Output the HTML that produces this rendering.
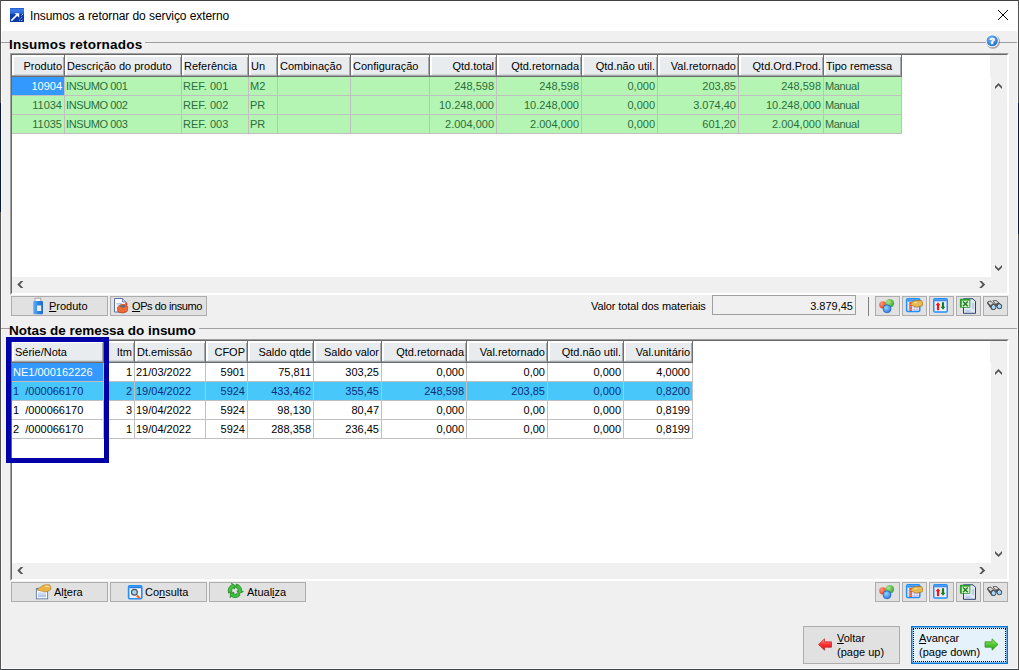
<!DOCTYPE html><html><head><meta charset="utf-8"><style>
html,body{margin:0;padding:0;width:1019px;height:670px;overflow:hidden;background:#f0f0f0;}
.a{position:absolute;}
.t{font-family:"Liberation Sans",sans-serif;}
u{text-decoration:underline;text-underline-offset:1px;}
</style></head><body>
<div class="a " style="left:0px;top:0px;width:1019px;height:670px;background:#f0f0f0;"></div>
<div class="a " style="left:1px;top:1px;width:1017px;height:30px;background:#fff;"></div>
<div class="a " style="left:1px;top:31px;width:1px;height:638px;background:#fafafa;"></div>
<div class="a " style="left:1017px;top:31px;width:1px;height:638px;background:#fafafa;"></div>
<div class="a " style="left:1px;top:668px;width:1017px;height:1px;background:#fafafa;"></div>
<div class="a " style="left:0px;top:0px;width:1019px;height:1px;background:#424242;"></div>
<div class="a " style="left:0px;top:669px;width:1019px;height:1px;background:#40444c;"></div>
<div class="a " style="left:0px;top:0px;width:1px;height:670px;background:#555555;"></div>
<div class="a " style="left:1018px;top:0px;width:1px;height:670px;background:#505050;"></div>
<div class="a " style="left:0px;top:103px;width:1px;height:109px;background:#0c1a40;"></div>
<div class="a " style="left:1018px;top:103px;width:1px;height:131px;background:#0c1a40;"></div>
<svg class="a" style="left:10px;top:8px" width="14" height="14" viewBox="0 0 14 14">
<defs><linearGradient id="tg" x1="0" y1="0" x2="0" y2="1"><stop offset="0" stop-color="#1a55c8"/><stop offset="0.12" stop-color="#3d7fe6"/><stop offset="0.38" stop-color="#2a66d4"/><stop offset="0.48" stop-color="#0a3cae"/><stop offset="1" stop-color="#0636a6"/></linearGradient></defs>
<rect x="0" y="0" width="14" height="14" fill="url(#tg)"/>
<path d="M1.3 12.6 L7 6.9" stroke="#fff" stroke-width="1.7"/>
<path d="M4.6 5.2 L9.2 5.2 L9.2 9.8 Z" fill="#fff"/>
<path d="M10.5 10.5 l1.2 -1.2 M11 13 l1.5 -1.2 M11.5 7.5 l1.5 -1.5 M9 12.5 l1 -0.8" stroke="#a8c4f0" stroke-width="1"/>
</svg>
<div class="a t" style="left:30px;top:6px;white-space:nowrap;height:20px;line-height:20px;font-size:12px;color:#000;letter-spacing:-0.08px;">Insumos a retornar do serviço externo</div>
<svg class="a" style="left:997px;top:9px" width="13" height="13" viewBox="0 0 13 13"><path d="M1 1 L11 11 M11 1 L1 11" stroke="#000" stroke-width="1"/></svg>
<div class="a " style="left:1px;top:42px;width:9px;height:1px;background:#a0a0a0;"></div>
<div class="a " style="left:145px;top:42px;width:872px;height:1px;background:#a0a0a0;"></div>
<div class="a t" style="left:9px;top:35px;white-space:nowrap;height:20px;line-height:20px;font-size:13.5px;color:#000;font-weight:bold;letter-spacing:0.2px;">Insumos retornados</div>
<div class="a " style="left:10px;top:53px;width:999px;height:242px;background:#fff;box-sizing:border-box;border-top:1px solid #a0a0a0;border-left:1px solid #a0a0a0;border-right:1px solid #fff;border-bottom:1px solid #fff;"></div>
<div class="a " style="left:11px;top:54px;width:997px;height:240px;box-sizing:border-box;border-top:1px solid #696969;border-left:1px solid #696969;border-right:1px solid #fff;border-bottom:1px solid #fff;"></div>
<div class="a " style="left:12px;top:55px;width:53px;height:22px;background:#e9ecef;"></div>
<div class="a " style="left:12px;top:55px;width:52px;height:2px;background:#fff;"></div>
<div class="a " style="left:12px;top:55px;width:2px;height:20px;background:#fff;"></div>
<div class="a " style="left:14px;top:74px;width:50px;height:1px;background:#d5d8db;"></div>
<div class="a " style="left:12px;top:75px;width:52px;height:1px;background:#a4a7aa;"></div>
<div class="a " style="left:12px;top:76px;width:53px;height:1px;background:#6d6d6d;"></div>
<div class="a " style="left:63px;top:57px;width:1px;height:18px;background:#a8abae;"></div>
<div class="a " style="left:64px;top:55px;width:1px;height:22px;background:#707070;"></div>
<div class="a t" style="left:12px;top:56px;width:50px;text-align:right;height:20px;line-height:20px;font-size:11px;color:#000;">Produto</div>
<div class="a " style="left:65px;top:55px;width:117px;height:22px;background:#e9ecef;"></div>
<div class="a " style="left:65px;top:55px;width:116px;height:2px;background:#fff;"></div>
<div class="a " style="left:65px;top:55px;width:2px;height:20px;background:#fff;"></div>
<div class="a " style="left:67px;top:74px;width:114px;height:1px;background:#d5d8db;"></div>
<div class="a " style="left:65px;top:75px;width:116px;height:1px;background:#a4a7aa;"></div>
<div class="a " style="left:65px;top:76px;width:117px;height:1px;background:#6d6d6d;"></div>
<div class="a " style="left:180px;top:57px;width:1px;height:18px;background:#a8abae;"></div>
<div class="a " style="left:181px;top:55px;width:1px;height:22px;background:#707070;"></div>
<div class="a t" style="left:67px;top:56px;white-space:nowrap;height:20px;line-height:20px;font-size:11px;color:#000;">Descrição do produto</div>
<div class="a " style="left:182px;top:55px;width:67px;height:22px;background:#e9ecef;"></div>
<div class="a " style="left:182px;top:55px;width:66px;height:2px;background:#fff;"></div>
<div class="a " style="left:182px;top:55px;width:2px;height:20px;background:#fff;"></div>
<div class="a " style="left:184px;top:74px;width:64px;height:1px;background:#d5d8db;"></div>
<div class="a " style="left:182px;top:75px;width:66px;height:1px;background:#a4a7aa;"></div>
<div class="a " style="left:182px;top:76px;width:67px;height:1px;background:#6d6d6d;"></div>
<div class="a " style="left:247px;top:57px;width:1px;height:18px;background:#a8abae;"></div>
<div class="a " style="left:248px;top:55px;width:1px;height:22px;background:#707070;"></div>
<div class="a t" style="left:184px;top:56px;white-space:nowrap;height:20px;line-height:20px;font-size:11px;color:#000;">Referência</div>
<div class="a " style="left:249px;top:55px;width:29px;height:22px;background:#e9ecef;"></div>
<div class="a " style="left:249px;top:55px;width:28px;height:2px;background:#fff;"></div>
<div class="a " style="left:249px;top:55px;width:2px;height:20px;background:#fff;"></div>
<div class="a " style="left:251px;top:74px;width:26px;height:1px;background:#d5d8db;"></div>
<div class="a " style="left:249px;top:75px;width:28px;height:1px;background:#a4a7aa;"></div>
<div class="a " style="left:249px;top:76px;width:29px;height:1px;background:#6d6d6d;"></div>
<div class="a " style="left:276px;top:57px;width:1px;height:18px;background:#a8abae;"></div>
<div class="a " style="left:277px;top:55px;width:1px;height:22px;background:#707070;"></div>
<div class="a t" style="left:251px;top:56px;white-space:nowrap;height:20px;line-height:20px;font-size:11px;color:#000;">Un</div>
<div class="a " style="left:278px;top:55px;width:73px;height:22px;background:#e9ecef;"></div>
<div class="a " style="left:278px;top:55px;width:72px;height:2px;background:#fff;"></div>
<div class="a " style="left:278px;top:55px;width:2px;height:20px;background:#fff;"></div>
<div class="a " style="left:280px;top:74px;width:70px;height:1px;background:#d5d8db;"></div>
<div class="a " style="left:278px;top:75px;width:72px;height:1px;background:#a4a7aa;"></div>
<div class="a " style="left:278px;top:76px;width:73px;height:1px;background:#6d6d6d;"></div>
<div class="a " style="left:349px;top:57px;width:1px;height:18px;background:#a8abae;"></div>
<div class="a " style="left:350px;top:55px;width:1px;height:22px;background:#707070;"></div>
<div class="a t" style="left:280px;top:56px;white-space:nowrap;height:20px;line-height:20px;font-size:11px;color:#000;">Combinação</div>
<div class="a " style="left:351px;top:55px;width:79px;height:22px;background:#e9ecef;"></div>
<div class="a " style="left:351px;top:55px;width:78px;height:2px;background:#fff;"></div>
<div class="a " style="left:351px;top:55px;width:2px;height:20px;background:#fff;"></div>
<div class="a " style="left:353px;top:74px;width:76px;height:1px;background:#d5d8db;"></div>
<div class="a " style="left:351px;top:75px;width:78px;height:1px;background:#a4a7aa;"></div>
<div class="a " style="left:351px;top:76px;width:79px;height:1px;background:#6d6d6d;"></div>
<div class="a " style="left:428px;top:57px;width:1px;height:18px;background:#a8abae;"></div>
<div class="a " style="left:429px;top:55px;width:1px;height:22px;background:#707070;"></div>
<div class="a t" style="left:353px;top:56px;white-space:nowrap;height:20px;line-height:20px;font-size:11px;color:#000;">Configuração</div>
<div class="a " style="left:430px;top:55px;width:67px;height:22px;background:#e9ecef;"></div>
<div class="a " style="left:430px;top:55px;width:66px;height:2px;background:#fff;"></div>
<div class="a " style="left:430px;top:55px;width:2px;height:20px;background:#fff;"></div>
<div class="a " style="left:432px;top:74px;width:64px;height:1px;background:#d5d8db;"></div>
<div class="a " style="left:430px;top:75px;width:66px;height:1px;background:#a4a7aa;"></div>
<div class="a " style="left:430px;top:76px;width:67px;height:1px;background:#6d6d6d;"></div>
<div class="a " style="left:495px;top:57px;width:1px;height:18px;background:#a8abae;"></div>
<div class="a " style="left:496px;top:55px;width:1px;height:22px;background:#707070;"></div>
<div class="a t" style="left:430px;top:56px;width:64px;text-align:right;height:20px;line-height:20px;font-size:11px;color:#000;">Qtd.total</div>
<div class="a " style="left:497px;top:55px;width:85px;height:22px;background:#e9ecef;"></div>
<div class="a " style="left:497px;top:55px;width:84px;height:2px;background:#fff;"></div>
<div class="a " style="left:497px;top:55px;width:2px;height:20px;background:#fff;"></div>
<div class="a " style="left:499px;top:74px;width:82px;height:1px;background:#d5d8db;"></div>
<div class="a " style="left:497px;top:75px;width:84px;height:1px;background:#a4a7aa;"></div>
<div class="a " style="left:497px;top:76px;width:85px;height:1px;background:#6d6d6d;"></div>
<div class="a " style="left:580px;top:57px;width:1px;height:18px;background:#a8abae;"></div>
<div class="a " style="left:581px;top:55px;width:1px;height:22px;background:#707070;"></div>
<div class="a t" style="left:497px;top:56px;width:82px;text-align:right;height:20px;line-height:20px;font-size:11px;color:#000;">Qtd.retornada</div>
<div class="a " style="left:582px;top:55px;width:76px;height:22px;background:#e9ecef;"></div>
<div class="a " style="left:582px;top:55px;width:75px;height:2px;background:#fff;"></div>
<div class="a " style="left:582px;top:55px;width:2px;height:20px;background:#fff;"></div>
<div class="a " style="left:584px;top:74px;width:73px;height:1px;background:#d5d8db;"></div>
<div class="a " style="left:582px;top:75px;width:75px;height:1px;background:#a4a7aa;"></div>
<div class="a " style="left:582px;top:76px;width:76px;height:1px;background:#6d6d6d;"></div>
<div class="a " style="left:656px;top:57px;width:1px;height:18px;background:#a8abae;"></div>
<div class="a " style="left:657px;top:55px;width:1px;height:22px;background:#707070;"></div>
<div class="a t" style="left:582px;top:56px;width:73px;text-align:right;height:20px;line-height:20px;font-size:11px;color:#000;">Qtd.não util.</div>
<div class="a " style="left:658px;top:55px;width:81px;height:22px;background:#e9ecef;"></div>
<div class="a " style="left:658px;top:55px;width:80px;height:2px;background:#fff;"></div>
<div class="a " style="left:658px;top:55px;width:2px;height:20px;background:#fff;"></div>
<div class="a " style="left:660px;top:74px;width:78px;height:1px;background:#d5d8db;"></div>
<div class="a " style="left:658px;top:75px;width:80px;height:1px;background:#a4a7aa;"></div>
<div class="a " style="left:658px;top:76px;width:81px;height:1px;background:#6d6d6d;"></div>
<div class="a " style="left:737px;top:57px;width:1px;height:18px;background:#a8abae;"></div>
<div class="a " style="left:738px;top:55px;width:1px;height:22px;background:#707070;"></div>
<div class="a t" style="left:658px;top:56px;width:78px;text-align:right;height:20px;line-height:20px;font-size:11px;color:#000;">Val.retornado</div>
<div class="a " style="left:739px;top:55px;width:85px;height:22px;background:#e9ecef;"></div>
<div class="a " style="left:739px;top:55px;width:84px;height:2px;background:#fff;"></div>
<div class="a " style="left:739px;top:55px;width:2px;height:20px;background:#fff;"></div>
<div class="a " style="left:741px;top:74px;width:82px;height:1px;background:#d5d8db;"></div>
<div class="a " style="left:739px;top:75px;width:84px;height:1px;background:#a4a7aa;"></div>
<div class="a " style="left:739px;top:76px;width:85px;height:1px;background:#6d6d6d;"></div>
<div class="a " style="left:822px;top:57px;width:1px;height:18px;background:#a8abae;"></div>
<div class="a " style="left:823px;top:55px;width:1px;height:22px;background:#707070;"></div>
<div class="a t" style="left:739px;top:56px;width:82px;text-align:right;height:20px;line-height:20px;font-size:11px;color:#000;">Qtd.Ord.Prod.</div>
<div class="a " style="left:824px;top:55px;width:78px;height:22px;background:#e9ecef;"></div>
<div class="a " style="left:824px;top:55px;width:77px;height:2px;background:#fff;"></div>
<div class="a " style="left:824px;top:55px;width:2px;height:20px;background:#fff;"></div>
<div class="a " style="left:826px;top:74px;width:75px;height:1px;background:#d5d8db;"></div>
<div class="a " style="left:824px;top:75px;width:77px;height:1px;background:#a4a7aa;"></div>
<div class="a " style="left:824px;top:76px;width:78px;height:1px;background:#6d6d6d;"></div>
<div class="a " style="left:900px;top:57px;width:1px;height:18px;background:#a8abae;"></div>
<div class="a " style="left:901px;top:55px;width:1px;height:22px;background:#707070;"></div>
<div class="a t" style="left:826px;top:56px;white-space:nowrap;height:20px;line-height:20px;font-size:11px;color:#000;">Tipo remessa</div>
<div class="a " style="left:12px;top:77px;width:52px;height:18px;background:#3399ff;"></div>
<div class="a " style="left:64px;top:77px;width:1px;height:19px;background:#c0c0c0;"></div>
<div class="a " style="left:12px;top:95px;width:52px;height:1px;background:#c0c0c0;"></div>
<div class="a t" style="left:12px;top:76px;width:50px;text-align:right;height:20px;line-height:20px;font-size:11px;color:#ffffff;">10904</div>
<div class="a " style="left:65px;top:77px;width:116px;height:18px;background:#b4f5b4;"></div>
<div class="a " style="left:181px;top:77px;width:1px;height:19px;background:#c0c0c0;"></div>
<div class="a " style="left:65px;top:95px;width:116px;height:1px;background:#c0c0c0;"></div>
<div class="a t" style="left:66px;top:76px;white-space:nowrap;height:20px;line-height:20px;font-size:11px;color:#2c6e3a;letter-spacing:-0.4px;">INSUMO 001</div>
<div class="a " style="left:182px;top:77px;width:66px;height:18px;background:#b4f5b4;"></div>
<div class="a " style="left:248px;top:77px;width:1px;height:19px;background:#c0c0c0;"></div>
<div class="a " style="left:182px;top:95px;width:66px;height:1px;background:#c0c0c0;"></div>
<div class="a t" style="left:183px;top:76px;white-space:nowrap;height:20px;line-height:20px;font-size:11px;color:#2c6e3a;">REF. 001</div>
<div class="a " style="left:249px;top:77px;width:28px;height:18px;background:#b4f5b4;"></div>
<div class="a " style="left:277px;top:77px;width:1px;height:19px;background:#c0c0c0;"></div>
<div class="a " style="left:249px;top:95px;width:28px;height:1px;background:#c0c0c0;"></div>
<div class="a t" style="left:250px;top:76px;white-space:nowrap;height:20px;line-height:20px;font-size:11px;color:#2c6e3a;">M2</div>
<div class="a " style="left:278px;top:77px;width:72px;height:18px;background:#b4f5b4;"></div>
<div class="a " style="left:350px;top:77px;width:1px;height:19px;background:#c0c0c0;"></div>
<div class="a " style="left:278px;top:95px;width:72px;height:1px;background:#c0c0c0;"></div>
<div class="a " style="left:351px;top:77px;width:78px;height:18px;background:#b4f5b4;"></div>
<div class="a " style="left:429px;top:77px;width:1px;height:19px;background:#c0c0c0;"></div>
<div class="a " style="left:351px;top:95px;width:78px;height:1px;background:#c0c0c0;"></div>
<div class="a " style="left:430px;top:77px;width:66px;height:18px;background:#b4f5b4;"></div>
<div class="a " style="left:496px;top:77px;width:1px;height:19px;background:#c0c0c0;"></div>
<div class="a " style="left:430px;top:95px;width:66px;height:1px;background:#c0c0c0;"></div>
<div class="a t" style="left:430px;top:76px;width:64px;text-align:right;height:20px;line-height:20px;font-size:11px;color:#2c6e3a;">248,598</div>
<div class="a " style="left:497px;top:77px;width:84px;height:18px;background:#b4f5b4;"></div>
<div class="a " style="left:581px;top:77px;width:1px;height:19px;background:#c0c0c0;"></div>
<div class="a " style="left:497px;top:95px;width:84px;height:1px;background:#c0c0c0;"></div>
<div class="a t" style="left:497px;top:76px;width:82px;text-align:right;height:20px;line-height:20px;font-size:11px;color:#2c6e3a;">248,598</div>
<div class="a " style="left:582px;top:77px;width:75px;height:18px;background:#b4f5b4;"></div>
<div class="a " style="left:657px;top:77px;width:1px;height:19px;background:#c0c0c0;"></div>
<div class="a " style="left:582px;top:95px;width:75px;height:1px;background:#c0c0c0;"></div>
<div class="a t" style="left:582px;top:76px;width:73px;text-align:right;height:20px;line-height:20px;font-size:11px;color:#2c6e3a;">0,000</div>
<div class="a " style="left:658px;top:77px;width:80px;height:18px;background:#b4f5b4;"></div>
<div class="a " style="left:738px;top:77px;width:1px;height:19px;background:#c0c0c0;"></div>
<div class="a " style="left:658px;top:95px;width:80px;height:1px;background:#c0c0c0;"></div>
<div class="a t" style="left:658px;top:76px;width:78px;text-align:right;height:20px;line-height:20px;font-size:11px;color:#2c6e3a;">203,85</div>
<div class="a " style="left:739px;top:77px;width:84px;height:18px;background:#b4f5b4;"></div>
<div class="a " style="left:823px;top:77px;width:1px;height:19px;background:#c0c0c0;"></div>
<div class="a " style="left:739px;top:95px;width:84px;height:1px;background:#c0c0c0;"></div>
<div class="a t" style="left:739px;top:76px;width:82px;text-align:right;height:20px;line-height:20px;font-size:11px;color:#2c6e3a;">248,598</div>
<div class="a " style="left:824px;top:77px;width:77px;height:18px;background:#b4f5b4;"></div>
<div class="a " style="left:901px;top:77px;width:1px;height:19px;background:#c0c0c0;"></div>
<div class="a " style="left:824px;top:95px;width:77px;height:1px;background:#c0c0c0;"></div>
<div class="a t" style="left:825px;top:76px;white-space:nowrap;height:20px;line-height:20px;font-size:11px;color:#2c6e3a;letter-spacing:-0.35px;">Manual</div>
<div class="a " style="left:12px;top:96px;width:52px;height:18px;background:#b4f5b4;"></div>
<div class="a " style="left:64px;top:96px;width:1px;height:19px;background:#c0c0c0;"></div>
<div class="a " style="left:12px;top:114px;width:52px;height:1px;background:#c0c0c0;"></div>
<div class="a t" style="left:12px;top:95px;width:50px;text-align:right;height:20px;line-height:20px;font-size:11px;color:#2c6e3a;">11034</div>
<div class="a " style="left:65px;top:96px;width:116px;height:18px;background:#b4f5b4;"></div>
<div class="a " style="left:181px;top:96px;width:1px;height:19px;background:#c0c0c0;"></div>
<div class="a " style="left:65px;top:114px;width:116px;height:1px;background:#c0c0c0;"></div>
<div class="a t" style="left:66px;top:95px;white-space:nowrap;height:20px;line-height:20px;font-size:11px;color:#2c6e3a;letter-spacing:-0.4px;">INSUMO 002</div>
<div class="a " style="left:182px;top:96px;width:66px;height:18px;background:#b4f5b4;"></div>
<div class="a " style="left:248px;top:96px;width:1px;height:19px;background:#c0c0c0;"></div>
<div class="a " style="left:182px;top:114px;width:66px;height:1px;background:#c0c0c0;"></div>
<div class="a t" style="left:183px;top:95px;white-space:nowrap;height:20px;line-height:20px;font-size:11px;color:#2c6e3a;">REF. 002</div>
<div class="a " style="left:249px;top:96px;width:28px;height:18px;background:#b4f5b4;"></div>
<div class="a " style="left:277px;top:96px;width:1px;height:19px;background:#c0c0c0;"></div>
<div class="a " style="left:249px;top:114px;width:28px;height:1px;background:#c0c0c0;"></div>
<div class="a t" style="left:250px;top:95px;white-space:nowrap;height:20px;line-height:20px;font-size:11px;color:#2c6e3a;">PR</div>
<div class="a " style="left:278px;top:96px;width:72px;height:18px;background:#b4f5b4;"></div>
<div class="a " style="left:350px;top:96px;width:1px;height:19px;background:#c0c0c0;"></div>
<div class="a " style="left:278px;top:114px;width:72px;height:1px;background:#c0c0c0;"></div>
<div class="a " style="left:351px;top:96px;width:78px;height:18px;background:#b4f5b4;"></div>
<div class="a " style="left:429px;top:96px;width:1px;height:19px;background:#c0c0c0;"></div>
<div class="a " style="left:351px;top:114px;width:78px;height:1px;background:#c0c0c0;"></div>
<div class="a " style="left:430px;top:96px;width:66px;height:18px;background:#b4f5b4;"></div>
<div class="a " style="left:496px;top:96px;width:1px;height:19px;background:#c0c0c0;"></div>
<div class="a " style="left:430px;top:114px;width:66px;height:1px;background:#c0c0c0;"></div>
<div class="a t" style="left:430px;top:95px;width:64px;text-align:right;height:20px;line-height:20px;font-size:11px;color:#2c6e3a;">10.248,000</div>
<div class="a " style="left:497px;top:96px;width:84px;height:18px;background:#b4f5b4;"></div>
<div class="a " style="left:581px;top:96px;width:1px;height:19px;background:#c0c0c0;"></div>
<div class="a " style="left:497px;top:114px;width:84px;height:1px;background:#c0c0c0;"></div>
<div class="a t" style="left:497px;top:95px;width:82px;text-align:right;height:20px;line-height:20px;font-size:11px;color:#2c6e3a;">10.248,000</div>
<div class="a " style="left:582px;top:96px;width:75px;height:18px;background:#b4f5b4;"></div>
<div class="a " style="left:657px;top:96px;width:1px;height:19px;background:#c0c0c0;"></div>
<div class="a " style="left:582px;top:114px;width:75px;height:1px;background:#c0c0c0;"></div>
<div class="a t" style="left:582px;top:95px;width:73px;text-align:right;height:20px;line-height:20px;font-size:11px;color:#2c6e3a;">0,000</div>
<div class="a " style="left:658px;top:96px;width:80px;height:18px;background:#b4f5b4;"></div>
<div class="a " style="left:738px;top:96px;width:1px;height:19px;background:#c0c0c0;"></div>
<div class="a " style="left:658px;top:114px;width:80px;height:1px;background:#c0c0c0;"></div>
<div class="a t" style="left:658px;top:95px;width:78px;text-align:right;height:20px;line-height:20px;font-size:11px;color:#2c6e3a;">3.074,40</div>
<div class="a " style="left:739px;top:96px;width:84px;height:18px;background:#b4f5b4;"></div>
<div class="a " style="left:823px;top:96px;width:1px;height:19px;background:#c0c0c0;"></div>
<div class="a " style="left:739px;top:114px;width:84px;height:1px;background:#c0c0c0;"></div>
<div class="a t" style="left:739px;top:95px;width:82px;text-align:right;height:20px;line-height:20px;font-size:11px;color:#2c6e3a;">10.248,000</div>
<div class="a " style="left:824px;top:96px;width:77px;height:18px;background:#b4f5b4;"></div>
<div class="a " style="left:901px;top:96px;width:1px;height:19px;background:#c0c0c0;"></div>
<div class="a " style="left:824px;top:114px;width:77px;height:1px;background:#c0c0c0;"></div>
<div class="a t" style="left:825px;top:95px;white-space:nowrap;height:20px;line-height:20px;font-size:11px;color:#2c6e3a;letter-spacing:-0.35px;">Manual</div>
<div class="a " style="left:12px;top:115px;width:52px;height:18px;background:#b4f5b4;"></div>
<div class="a " style="left:64px;top:115px;width:1px;height:19px;background:#c0c0c0;"></div>
<div class="a " style="left:12px;top:133px;width:52px;height:1px;background:#c0c0c0;"></div>
<div class="a t" style="left:12px;top:114px;width:50px;text-align:right;height:20px;line-height:20px;font-size:11px;color:#2c6e3a;">11035</div>
<div class="a " style="left:65px;top:115px;width:116px;height:18px;background:#b4f5b4;"></div>
<div class="a " style="left:181px;top:115px;width:1px;height:19px;background:#c0c0c0;"></div>
<div class="a " style="left:65px;top:133px;width:116px;height:1px;background:#c0c0c0;"></div>
<div class="a t" style="left:66px;top:114px;white-space:nowrap;height:20px;line-height:20px;font-size:11px;color:#2c6e3a;letter-spacing:-0.4px;">INSUMO 003</div>
<div class="a " style="left:182px;top:115px;width:66px;height:18px;background:#b4f5b4;"></div>
<div class="a " style="left:248px;top:115px;width:1px;height:19px;background:#c0c0c0;"></div>
<div class="a " style="left:182px;top:133px;width:66px;height:1px;background:#c0c0c0;"></div>
<div class="a t" style="left:183px;top:114px;white-space:nowrap;height:20px;line-height:20px;font-size:11px;color:#2c6e3a;">REF. 003</div>
<div class="a " style="left:249px;top:115px;width:28px;height:18px;background:#b4f5b4;"></div>
<div class="a " style="left:277px;top:115px;width:1px;height:19px;background:#c0c0c0;"></div>
<div class="a " style="left:249px;top:133px;width:28px;height:1px;background:#c0c0c0;"></div>
<div class="a t" style="left:250px;top:114px;white-space:nowrap;height:20px;line-height:20px;font-size:11px;color:#2c6e3a;">PR</div>
<div class="a " style="left:278px;top:115px;width:72px;height:18px;background:#b4f5b4;"></div>
<div class="a " style="left:350px;top:115px;width:1px;height:19px;background:#c0c0c0;"></div>
<div class="a " style="left:278px;top:133px;width:72px;height:1px;background:#c0c0c0;"></div>
<div class="a " style="left:351px;top:115px;width:78px;height:18px;background:#b4f5b4;"></div>
<div class="a " style="left:429px;top:115px;width:1px;height:19px;background:#c0c0c0;"></div>
<div class="a " style="left:351px;top:133px;width:78px;height:1px;background:#c0c0c0;"></div>
<div class="a " style="left:430px;top:115px;width:66px;height:18px;background:#b4f5b4;"></div>
<div class="a " style="left:496px;top:115px;width:1px;height:19px;background:#c0c0c0;"></div>
<div class="a " style="left:430px;top:133px;width:66px;height:1px;background:#c0c0c0;"></div>
<div class="a t" style="left:430px;top:114px;width:64px;text-align:right;height:20px;line-height:20px;font-size:11px;color:#2c6e3a;">2.004,000</div>
<div class="a " style="left:497px;top:115px;width:84px;height:18px;background:#b4f5b4;"></div>
<div class="a " style="left:581px;top:115px;width:1px;height:19px;background:#c0c0c0;"></div>
<div class="a " style="left:497px;top:133px;width:84px;height:1px;background:#c0c0c0;"></div>
<div class="a t" style="left:497px;top:114px;width:82px;text-align:right;height:20px;line-height:20px;font-size:11px;color:#2c6e3a;">2.004,000</div>
<div class="a " style="left:582px;top:115px;width:75px;height:18px;background:#b4f5b4;"></div>
<div class="a " style="left:657px;top:115px;width:1px;height:19px;background:#c0c0c0;"></div>
<div class="a " style="left:582px;top:133px;width:75px;height:1px;background:#c0c0c0;"></div>
<div class="a t" style="left:582px;top:114px;width:73px;text-align:right;height:20px;line-height:20px;font-size:11px;color:#2c6e3a;">0,000</div>
<div class="a " style="left:658px;top:115px;width:80px;height:18px;background:#b4f5b4;"></div>
<div class="a " style="left:738px;top:115px;width:1px;height:19px;background:#c0c0c0;"></div>
<div class="a " style="left:658px;top:133px;width:80px;height:1px;background:#c0c0c0;"></div>
<div class="a t" style="left:658px;top:114px;width:78px;text-align:right;height:20px;line-height:20px;font-size:11px;color:#2c6e3a;">601,20</div>
<div class="a " style="left:739px;top:115px;width:84px;height:18px;background:#b4f5b4;"></div>
<div class="a " style="left:823px;top:115px;width:1px;height:19px;background:#c0c0c0;"></div>
<div class="a " style="left:739px;top:133px;width:84px;height:1px;background:#c0c0c0;"></div>
<div class="a t" style="left:739px;top:114px;width:82px;text-align:right;height:20px;line-height:20px;font-size:11px;color:#2c6e3a;">2.004,000</div>
<div class="a " style="left:824px;top:115px;width:77px;height:18px;background:#b4f5b4;"></div>
<div class="a " style="left:901px;top:115px;width:1px;height:19px;background:#c0c0c0;"></div>
<div class="a " style="left:824px;top:133px;width:77px;height:1px;background:#c0c0c0;"></div>
<div class="a t" style="left:825px;top:114px;white-space:nowrap;height:20px;line-height:20px;font-size:11px;color:#2c6e3a;letter-spacing:-0.35px;">Manual</div>
<div class="a " style="left:991px;top:55px;width:16px;height:222px;background:#f0f0f0;"></div>
<div class="a " style="left:990px;top:55px;width:1px;height:22px;background:#f0f0f0;"></div>
<div class="a " style="left:12px;top:277px;width:995px;height:16px;background:#f0f0f0;"></div>
<svg class="a" style="left:994px;top:82px" width="10" height="9"><path d="M1 7 L4.5 3.5 L8 7 V4.6 L4.5 1 L1 4.6 Z" fill="#555"/></svg>
<svg class="a" style="left:994px;top:264px" width="10" height="9"><path d="M1 1 L4.5 4.5 L8 1 V3.4 L4.5 7 L1 3.4 Z" fill="#555"/></svg>
<svg class="a" style="left:16px;top:280px" width="9" height="10"><path d="M4.8 1 H7.3 L4 4.5 L7.3 8 H4.8 L1.3 4.5 Z" fill="#555"/></svg>
<svg class="a" style="left:977px;top:280px" width="9" height="10"><path d="M2.2 1 H4.7 L8.2 4.5 L4.7 8 H2.2 L5.5 4.5 Z" fill="#555"/></svg>
<div class="a " style="left:11px;top:296px;width:97px;height:20px;box-sizing:border-box;background:#e1e1e1;border:1px solid #adadad;"></div>
<svg class="a" style="left:28px;top:294px" width="20" height="24" viewBox="0 0 20 24">
<defs><linearGradient id="bt298" x1="0" y1="0" x2="1" y2="0"><stop offset="0" stop-color="#5fb0ff"/><stop offset="0.5" stop-color="#2f86e8"/><stop offset="1" stop-color="#1f68c8"/></linearGradient></defs>
<rect x="7" y="4.2" width="5.8" height="4" fill="#f4f4f4" stroke="#9a9a9a" stroke-width="0.8"/>
<path d="M5.2 8.2 Q5.2 7 6.4 7 H13.8 Q15 7 15 8.2 V19.3 Q15 20.3 14 20.3 H6.2 Q5.2 20.3 5.2 19.3 Z" fill="url(#bt298)"/>
<rect x="9" y="11.5" width="4.2" height="5.5" fill="#f0ecf4"/></svg>
<div class="a t" style="left:49px;top:296px;white-space:nowrap;height:20px;line-height:20px;font-size:11px;color:#000;"><u>P</u>roduto</div>
<div class="a " style="left:110px;top:296px;width:97px;height:20px;box-sizing:border-box;background:#e1e1e1;border:1px solid #adadad;"></div>
<svg class="a" style="left:110px;top:294px" width="22" height="24" viewBox="0 0 22 24">
<path d="M4.5 4.5 H12.5 L16 8 V18 H4.5 Z" fill="#fdfdff" stroke="#5a6ea8" stroke-width="1"/>
<path d="M12.5 4.5 V8 H16" fill="#c8d4f0" stroke="#5a6ea8" stroke-width="0.8"/>
<path d="M6.5 9.5 h5.5 M6.5 11 h3" stroke="#8a9ad0" stroke-width="0.6"/>
<path d="M7.2 13.5 L10 10.8 L14 10.3 L17.8 12.5 L17.3 17.2 L13 19 L8 18 Z" fill="#f26a3a" stroke="#a83810" stroke-width="0.6"/>
<path d="M9.5 12.5 L11.5 11 L14.5 11 L16 12.3 L13 14 Z" fill="#6a6a6a"/>
<path d="M15.5 9 l1.5 -0.5 l0.5 2.5 l-1.5 0.5 Z" fill="#e03a10"/></svg>
<div class="a t" style="left:132px;top:296px;white-space:nowrap;height:20px;line-height:20px;font-size:11px;color:#000;letter-spacing:-0.4px;"><u>O</u>Ps do insumo</div>
<div class="a " style="left:875px;top:296px;width:25px;height:20px;box-sizing:border-box;background:#e1e1e1;border:1px solid #adadad;"></div>
<svg class="a" style="left:875px;top:296px" width="25" height="20" viewBox="0 0 25 20">
<defs><radialGradient id="c0r" cx="0.35" cy="0.35" r="0.7"><stop offset="0" stop-color="#ff9a7a"/><stop offset="1" stop-color="#e0401e"/></radialGradient>
<radialGradient id="c0g" cx="0.35" cy="0.35" r="0.7"><stop offset="0" stop-color="#a8e890"/><stop offset="1" stop-color="#3aa030"/></radialGradient>
<radialGradient id="c0b" cx="0.4" cy="0.35" r="0.7"><stop offset="0" stop-color="#8fd8ff"/><stop offset="1" stop-color="#2a78e0"/></radialGradient></defs>
<circle cx="7.8" cy="8.8" r="3.6" fill="url(#c0r)"/>
<circle cx="14.8" cy="7.3" r="4.3" fill="url(#c0g)"/>
<circle cx="12" cy="12.8" r="4" fill="url(#c0b)" stroke="#1f5cc0" stroke-width="0.7"/></svg>
<div class="a " style="left:902px;top:296px;width:25px;height:20px;box-sizing:border-box;background:#e1e1e1;border:1px solid #adadad;"></div>
<svg class="a" style="left:902px;top:296px" width="25" height="20" viewBox="0 0 25 20">
<rect x="4.6" y="2.8" width="13.2" height="12.6" rx="1.2" fill="#f2eefa" stroke="#1e90ff" stroke-width="1.5"/>
<rect x="5.3" y="3.4" width="11.8" height="2.2" fill="#3d8ee8"/>
<rect x="7.2" y="6" width="2.8" height="9" fill="#f05a30"/>
<path d="M5.5 8.5 h11.5 M5.5 11 h11.5 M5.5 13.5 h11.5 M12.5 6 v9 M15 6 v9" stroke="#b8b0e0" stroke-width="0.6"/>
<path d="M8.5 8.2 Q10 5 13.5 4.6 L19.5 4.4 Q21.3 6.5 20.3 9.8 L16 11 Q13 11.5 11.5 10 Q9.5 9.5 8.5 8.2 Z" fill="#e6b850" stroke="#9a6a12" stroke-width="0.6"/>
<path d="M12 6.5 q1.5 0.5 3 0" stroke="#fff2b0" stroke-width="0.8" fill="none"/></svg>
<div class="a " style="left:929px;top:296px;width:25px;height:20px;box-sizing:border-box;background:#e1e1e1;border:1px solid #adadad;"></div>
<svg class="a" style="left:929px;top:296px" width="25" height="20" viewBox="0 0 25 20">
<rect x="4.75" y="2.75" width="13.5" height="13.2" rx="1.3" fill="#f4f0fc" stroke="#1e90ff" stroke-width="1.5"/>
<rect x="5.3" y="3.3" width="12.4" height="2" fill="#3d8ee8"/>
<path d="M9 14.2 V8.5" stroke="#ff1010" stroke-width="2.2"/>
<path d="M6.6 9.3 L9 6.2 L11.4 9.3 Z" fill="#ff1010"/>
<path d="M14 6.2 V11.6" stroke="#108020" stroke-width="2.2"/>
<path d="M11.6 10.8 L14 13.8 L16.4 10.8 Z" fill="#108020"/></svg>
<div class="a " style="left:956px;top:296px;width:25px;height:20px;box-sizing:border-box;background:#e1e1e1;border:1px solid #adadad;"></div>
<svg class="a" style="left:956px;top:296px" width="25" height="20" viewBox="0 0 25 20">
<path d="M7.5 2.8 H17 L19.5 5.3 V17.3 H7.5 Z" fill="#dfe8f6" stroke="#2a3f78" stroke-width="1"/>
<path d="M9.5 15 h5 M17 7 v6" stroke="#8aa6d6" stroke-width="0.8"/>
<rect x="3.9" y="2.8" width="10.4" height="9" rx="1" fill="#2a9a30"/>
<rect x="5.8" y="4.6" width="7.6" height="6.4" fill="#d8f5c8"/>
<path d="M7 5.5 L11.8 10.2 M11.8 5.5 L7 10.2" stroke="#1f7a24" stroke-width="1.4"/></svg>
<div class="a " style="left:983px;top:296px;width:25px;height:20px;box-sizing:border-box;background:#e1e1e1;border:1px solid #adadad;"></div>
<svg class="a" style="left:983px;top:296px" width="25" height="20" viewBox="0 0 25 20">
<path d="M3.8 7 Q4.5 5 7.5 4.6 L13 9.5 L12 13.8 L8.8 14 Z" fill="#505050"/>
<path d="M9.5 4.6 Q11 3.6 13.2 4 L19.2 9.2 L18.4 12.8 L14.8 12.8 Z" fill="#505050"/>
<path d="M5.2 6.8 Q6 5.6 7.6 5.6 L10 7.8 L7.4 9 Z" fill="#d8d8d8"/>
<path d="M10.6 5 Q11.8 4.5 13 4.8 L15.2 6.8 L12.6 7.8 Z" fill="#d8d8d8"/>
<circle cx="10.6" cy="11.2" r="2.4" fill="#9ad4ff" stroke="#404040" stroke-width="0.8"/>
<circle cx="16.4" cy="10.4" r="2.3" fill="#9ad4ff" stroke="#404040" stroke-width="0.8"/>
<path d="M9.6 10.2 l1 -0.6 M15.4 9.4 l1 -0.6" stroke="#fff" stroke-width="0.9"/></svg>
<div class="a t" style="left:591px;top:296px;white-space:nowrap;height:20px;line-height:20px;font-size:11px;color:#000;letter-spacing:-0.1px;">Valor total dos materiais</div>
<div class="a " style="left:712px;top:295px;width:144px;height:20px;box-sizing:border-box;background:#f0f0f0;border:1px solid #a0a0a0;"></div>
<div class="a t" style="left:712px;top:296px;width:141px;text-align:right;height:20px;line-height:20px;font-size:11px;color:#000;">3.879,45</div>
<div class="a " style="left:868px;top:297px;width:1px;height:19px;background:#808080;"></div>
<svg class="a" style="left:984px;top:33px" width="17" height="17" viewBox="0 0 17 17">
<defs><radialGradient id="hg" cx="0.4" cy="0.3" r="0.75"><stop offset="0" stop-color="#78b8f8"/><stop offset="1" stop-color="#1a6ad0"/></radialGradient></defs>
<circle cx="9" cy="8.7" r="7" fill="#404040" opacity="0.45"/>
<circle cx="8.2" cy="7.75" r="6.6" fill="#fff"/>
<circle cx="8.2" cy="7.75" r="5.6" fill="url(#hg)"/>
<text x="8.2" y="11" font-family="Liberation Sans" font-weight="bold" font-size="9.5" fill="#fff" stroke="#fff" stroke-width="0.5" text-anchor="middle">?</text></svg>
<div class="a " style="left:1px;top:328px;width:9px;height:1px;background:#a0a0a0;"></div>
<div class="a " style="left:199px;top:328px;width:818px;height:1px;background:#a0a0a0;"></div>
<div class="a t" style="left:9px;top:321px;white-space:nowrap;height:20px;line-height:20px;font-size:13.5px;color:#000;font-weight:bold;letter-spacing:-0.03px;">Notas de remessa do insumo</div>
<div class="a " style="left:10px;top:339px;width:999px;height:242px;background:#fff;box-sizing:border-box;border-top:1px solid #a0a0a0;border-left:1px solid #a0a0a0;border-right:1px solid #fff;border-bottom:1px solid #fff;"></div>
<div class="a " style="left:11px;top:340px;width:997px;height:240px;box-sizing:border-box;border-top:1px solid #696969;border-left:1px solid #696969;border-right:1px solid #fff;border-bottom:1px solid #fff;"></div>
<div class="a " style="left:12px;top:341px;width:92px;height:22px;background:#e9ecef;"></div>
<div class="a " style="left:12px;top:341px;width:91px;height:2px;background:#fff;"></div>
<div class="a " style="left:12px;top:341px;width:2px;height:20px;background:#fff;"></div>
<div class="a " style="left:14px;top:360px;width:89px;height:1px;background:#d5d8db;"></div>
<div class="a " style="left:12px;top:361px;width:91px;height:1px;background:#a4a7aa;"></div>
<div class="a " style="left:12px;top:362px;width:92px;height:1px;background:#6d6d6d;"></div>
<div class="a " style="left:102px;top:343px;width:1px;height:18px;background:#a8abae;"></div>
<div class="a " style="left:103px;top:341px;width:1px;height:22px;background:#707070;"></div>
<div class="a t" style="left:15px;top:342px;white-space:nowrap;height:20px;line-height:20px;font-size:11px;color:#000;">Série/Nota</div>
<div class="a " style="left:104px;top:341px;width:31px;height:22px;background:#e9ecef;"></div>
<div class="a " style="left:104px;top:341px;width:30px;height:2px;background:#fff;"></div>
<div class="a " style="left:104px;top:341px;width:2px;height:20px;background:#fff;"></div>
<div class="a " style="left:106px;top:360px;width:28px;height:1px;background:#d5d8db;"></div>
<div class="a " style="left:104px;top:361px;width:30px;height:1px;background:#a4a7aa;"></div>
<div class="a " style="left:104px;top:362px;width:31px;height:1px;background:#6d6d6d;"></div>
<div class="a " style="left:133px;top:343px;width:1px;height:18px;background:#a8abae;"></div>
<div class="a " style="left:134px;top:341px;width:1px;height:22px;background:#707070;"></div>
<div class="a t" style="left:104px;top:342px;width:28px;text-align:right;height:20px;line-height:20px;font-size:11px;color:#000;">Itm</div>
<div class="a " style="left:135px;top:341px;width:71px;height:22px;background:#e9ecef;"></div>
<div class="a " style="left:135px;top:341px;width:70px;height:2px;background:#fff;"></div>
<div class="a " style="left:135px;top:341px;width:2px;height:20px;background:#fff;"></div>
<div class="a " style="left:137px;top:360px;width:68px;height:1px;background:#d5d8db;"></div>
<div class="a " style="left:135px;top:361px;width:70px;height:1px;background:#a4a7aa;"></div>
<div class="a " style="left:135px;top:362px;width:71px;height:1px;background:#6d6d6d;"></div>
<div class="a " style="left:204px;top:343px;width:1px;height:18px;background:#a8abae;"></div>
<div class="a " style="left:205px;top:341px;width:1px;height:22px;background:#707070;"></div>
<div class="a t" style="left:137px;top:342px;white-space:nowrap;height:20px;line-height:20px;font-size:11px;color:#000;">Dt.emissão</div>
<div class="a " style="left:206px;top:341px;width:42px;height:22px;background:#e9ecef;"></div>
<div class="a " style="left:206px;top:341px;width:41px;height:2px;background:#fff;"></div>
<div class="a " style="left:206px;top:341px;width:2px;height:20px;background:#fff;"></div>
<div class="a " style="left:208px;top:360px;width:39px;height:1px;background:#d5d8db;"></div>
<div class="a " style="left:206px;top:361px;width:41px;height:1px;background:#a4a7aa;"></div>
<div class="a " style="left:206px;top:362px;width:42px;height:1px;background:#6d6d6d;"></div>
<div class="a " style="left:246px;top:343px;width:1px;height:18px;background:#a8abae;"></div>
<div class="a " style="left:247px;top:341px;width:1px;height:22px;background:#707070;"></div>
<div class="a t" style="left:206px;top:342px;width:39px;text-align:right;height:20px;line-height:20px;font-size:11px;color:#000;">CFOP</div>
<div class="a " style="left:248px;top:341px;width:66px;height:22px;background:#e9ecef;"></div>
<div class="a " style="left:248px;top:341px;width:65px;height:2px;background:#fff;"></div>
<div class="a " style="left:248px;top:341px;width:2px;height:20px;background:#fff;"></div>
<div class="a " style="left:250px;top:360px;width:63px;height:1px;background:#d5d8db;"></div>
<div class="a " style="left:248px;top:361px;width:65px;height:1px;background:#a4a7aa;"></div>
<div class="a " style="left:248px;top:362px;width:66px;height:1px;background:#6d6d6d;"></div>
<div class="a " style="left:312px;top:343px;width:1px;height:18px;background:#a8abae;"></div>
<div class="a " style="left:313px;top:341px;width:1px;height:22px;background:#707070;"></div>
<div class="a t" style="left:248px;top:342px;width:63px;text-align:right;height:20px;line-height:20px;font-size:11px;color:#000;">Saldo qtde</div>
<div class="a " style="left:314px;top:341px;width:68px;height:22px;background:#e9ecef;"></div>
<div class="a " style="left:314px;top:341px;width:67px;height:2px;background:#fff;"></div>
<div class="a " style="left:314px;top:341px;width:2px;height:20px;background:#fff;"></div>
<div class="a " style="left:316px;top:360px;width:65px;height:1px;background:#d5d8db;"></div>
<div class="a " style="left:314px;top:361px;width:67px;height:1px;background:#a4a7aa;"></div>
<div class="a " style="left:314px;top:362px;width:68px;height:1px;background:#6d6d6d;"></div>
<div class="a " style="left:380px;top:343px;width:1px;height:18px;background:#a8abae;"></div>
<div class="a " style="left:381px;top:341px;width:1px;height:22px;background:#707070;"></div>
<div class="a t" style="left:314px;top:342px;width:65px;text-align:right;height:20px;line-height:20px;font-size:11px;color:#000;">Saldo valor</div>
<div class="a " style="left:382px;top:341px;width:85px;height:22px;background:#e9ecef;"></div>
<div class="a " style="left:382px;top:341px;width:84px;height:2px;background:#fff;"></div>
<div class="a " style="left:382px;top:341px;width:2px;height:20px;background:#fff;"></div>
<div class="a " style="left:384px;top:360px;width:82px;height:1px;background:#d5d8db;"></div>
<div class="a " style="left:382px;top:361px;width:84px;height:1px;background:#a4a7aa;"></div>
<div class="a " style="left:382px;top:362px;width:85px;height:1px;background:#6d6d6d;"></div>
<div class="a " style="left:465px;top:343px;width:1px;height:18px;background:#a8abae;"></div>
<div class="a " style="left:466px;top:341px;width:1px;height:22px;background:#707070;"></div>
<div class="a t" style="left:382px;top:342px;width:82px;text-align:right;height:20px;line-height:20px;font-size:11px;color:#000;">Qtd.retornada</div>
<div class="a " style="left:467px;top:341px;width:81px;height:22px;background:#e9ecef;"></div>
<div class="a " style="left:467px;top:341px;width:80px;height:2px;background:#fff;"></div>
<div class="a " style="left:467px;top:341px;width:2px;height:20px;background:#fff;"></div>
<div class="a " style="left:469px;top:360px;width:78px;height:1px;background:#d5d8db;"></div>
<div class="a " style="left:467px;top:361px;width:80px;height:1px;background:#a4a7aa;"></div>
<div class="a " style="left:467px;top:362px;width:81px;height:1px;background:#6d6d6d;"></div>
<div class="a " style="left:546px;top:343px;width:1px;height:18px;background:#a8abae;"></div>
<div class="a " style="left:547px;top:341px;width:1px;height:22px;background:#707070;"></div>
<div class="a t" style="left:467px;top:342px;width:78px;text-align:right;height:20px;line-height:20px;font-size:11px;color:#000;">Val.retornado</div>
<div class="a " style="left:548px;top:341px;width:76px;height:22px;background:#e9ecef;"></div>
<div class="a " style="left:548px;top:341px;width:75px;height:2px;background:#fff;"></div>
<div class="a " style="left:548px;top:341px;width:2px;height:20px;background:#fff;"></div>
<div class="a " style="left:550px;top:360px;width:73px;height:1px;background:#d5d8db;"></div>
<div class="a " style="left:548px;top:361px;width:75px;height:1px;background:#a4a7aa;"></div>
<div class="a " style="left:548px;top:362px;width:76px;height:1px;background:#6d6d6d;"></div>
<div class="a " style="left:622px;top:343px;width:1px;height:18px;background:#a8abae;"></div>
<div class="a " style="left:623px;top:341px;width:1px;height:22px;background:#707070;"></div>
<div class="a t" style="left:548px;top:342px;width:73px;text-align:right;height:20px;line-height:20px;font-size:11px;color:#000;">Qtd.não util.</div>
<div class="a " style="left:624px;top:341px;width:69px;height:22px;background:#e9ecef;"></div>
<div class="a " style="left:624px;top:341px;width:68px;height:2px;background:#fff;"></div>
<div class="a " style="left:624px;top:341px;width:2px;height:20px;background:#fff;"></div>
<div class="a " style="left:626px;top:360px;width:66px;height:1px;background:#d5d8db;"></div>
<div class="a " style="left:624px;top:361px;width:68px;height:1px;background:#a4a7aa;"></div>
<div class="a " style="left:624px;top:362px;width:69px;height:1px;background:#6d6d6d;"></div>
<div class="a " style="left:691px;top:343px;width:1px;height:18px;background:#a8abae;"></div>
<div class="a " style="left:692px;top:341px;width:1px;height:22px;background:#707070;"></div>
<div class="a t" style="left:624px;top:342px;width:66px;text-align:right;height:20px;line-height:20px;font-size:11px;color:#000;">Val.unitário</div>
<div class="a " style="left:12px;top:363px;width:91px;height:18px;background:#3399ff;"></div>
<div class="a " style="left:103px;top:363px;width:1px;height:19px;background:#c0c0c0;"></div>
<div class="a " style="left:12px;top:381px;width:91px;height:1px;background:#c0c0c0;"></div>
<div class="a t" style="left:13px;top:362px;white-space:nowrap;height:20px;line-height:20px;font-size:11px;color:#ffffff;">NE1/000162226</div>
<div class="a " style="left:104px;top:363px;width:30px;height:18px;background:#fff;"></div>
<div class="a " style="left:134px;top:363px;width:1px;height:19px;background:#c0c0c0;"></div>
<div class="a " style="left:104px;top:381px;width:30px;height:1px;background:#c0c0c0;"></div>
<div class="a t" style="left:104px;top:362px;width:28px;text-align:right;height:20px;line-height:20px;font-size:11px;color:#000;">1</div>
<div class="a " style="left:135px;top:363px;width:70px;height:18px;background:#fff;"></div>
<div class="a " style="left:205px;top:363px;width:1px;height:19px;background:#c0c0c0;"></div>
<div class="a " style="left:135px;top:381px;width:70px;height:1px;background:#c0c0c0;"></div>
<div class="a t" style="left:136px;top:362px;white-space:nowrap;height:20px;line-height:20px;font-size:11px;color:#000;">21/03/2022</div>
<div class="a " style="left:206px;top:363px;width:41px;height:18px;background:#fff;"></div>
<div class="a " style="left:247px;top:363px;width:1px;height:19px;background:#c0c0c0;"></div>
<div class="a " style="left:206px;top:381px;width:41px;height:1px;background:#c0c0c0;"></div>
<div class="a t" style="left:206px;top:362px;width:39px;text-align:right;height:20px;line-height:20px;font-size:11px;color:#000;">5901</div>
<div class="a " style="left:248px;top:363px;width:65px;height:18px;background:#fff;"></div>
<div class="a " style="left:313px;top:363px;width:1px;height:19px;background:#c0c0c0;"></div>
<div class="a " style="left:248px;top:381px;width:65px;height:1px;background:#c0c0c0;"></div>
<div class="a t" style="left:248px;top:362px;width:63px;text-align:right;height:20px;line-height:20px;font-size:11px;color:#000;">75,811</div>
<div class="a " style="left:314px;top:363px;width:67px;height:18px;background:#fff;"></div>
<div class="a " style="left:381px;top:363px;width:1px;height:19px;background:#c0c0c0;"></div>
<div class="a " style="left:314px;top:381px;width:67px;height:1px;background:#c0c0c0;"></div>
<div class="a t" style="left:314px;top:362px;width:65px;text-align:right;height:20px;line-height:20px;font-size:11px;color:#000;">303,25</div>
<div class="a " style="left:382px;top:363px;width:84px;height:18px;background:#fff;"></div>
<div class="a " style="left:466px;top:363px;width:1px;height:19px;background:#c0c0c0;"></div>
<div class="a " style="left:382px;top:381px;width:84px;height:1px;background:#c0c0c0;"></div>
<div class="a t" style="left:382px;top:362px;width:82px;text-align:right;height:20px;line-height:20px;font-size:11px;color:#000;">0,000</div>
<div class="a " style="left:467px;top:363px;width:80px;height:18px;background:#fff;"></div>
<div class="a " style="left:547px;top:363px;width:1px;height:19px;background:#c0c0c0;"></div>
<div class="a " style="left:467px;top:381px;width:80px;height:1px;background:#c0c0c0;"></div>
<div class="a t" style="left:467px;top:362px;width:78px;text-align:right;height:20px;line-height:20px;font-size:11px;color:#000;">0,00</div>
<div class="a " style="left:548px;top:363px;width:75px;height:18px;background:#fff;"></div>
<div class="a " style="left:623px;top:363px;width:1px;height:19px;background:#c0c0c0;"></div>
<div class="a " style="left:548px;top:381px;width:75px;height:1px;background:#c0c0c0;"></div>
<div class="a t" style="left:548px;top:362px;width:73px;text-align:right;height:20px;line-height:20px;font-size:11px;color:#000;">0,000</div>
<div class="a " style="left:624px;top:363px;width:68px;height:18px;background:#fff;"></div>
<div class="a " style="left:692px;top:363px;width:1px;height:19px;background:#c0c0c0;"></div>
<div class="a " style="left:624px;top:381px;width:68px;height:1px;background:#c0c0c0;"></div>
<div class="a t" style="left:624px;top:362px;width:66px;text-align:right;height:20px;line-height:20px;font-size:11px;color:#000;">4,0000</div>
<div class="a " style="left:12px;top:382px;width:91px;height:18px;background:#48c8fa;"></div>
<div class="a " style="left:103px;top:382px;width:1px;height:19px;background:#c0c0c0;"></div>
<div class="a " style="left:12px;top:400px;width:91px;height:1px;background:#c0c0c0;"></div>
<div class="a t" style="left:13px;top:381px;white-space:nowrap;height:20px;line-height:20px;font-size:11px;color:#0b2f7a;">1&nbsp;&nbsp;/000066170</div>
<div class="a " style="left:104px;top:382px;width:30px;height:18px;background:#48c8fa;"></div>
<div class="a " style="left:134px;top:382px;width:1px;height:19px;background:#c0c0c0;"></div>
<div class="a " style="left:104px;top:400px;width:30px;height:1px;background:#c0c0c0;"></div>
<div class="a t" style="left:104px;top:381px;width:28px;text-align:right;height:20px;line-height:20px;font-size:11px;color:#0b2f7a;">2</div>
<div class="a " style="left:135px;top:382px;width:70px;height:18px;background:#48c8fa;"></div>
<div class="a " style="left:205px;top:382px;width:1px;height:19px;background:#c0c0c0;"></div>
<div class="a " style="left:135px;top:400px;width:70px;height:1px;background:#c0c0c0;"></div>
<div class="a t" style="left:136px;top:381px;white-space:nowrap;height:20px;line-height:20px;font-size:11px;color:#0b2f7a;">19/04/2022</div>
<div class="a " style="left:206px;top:382px;width:41px;height:18px;background:#48c8fa;"></div>
<div class="a " style="left:247px;top:382px;width:1px;height:19px;background:#c0c0c0;"></div>
<div class="a " style="left:206px;top:400px;width:41px;height:1px;background:#c0c0c0;"></div>
<div class="a t" style="left:206px;top:381px;width:39px;text-align:right;height:20px;line-height:20px;font-size:11px;color:#0b2f7a;">5924</div>
<div class="a " style="left:248px;top:382px;width:65px;height:18px;background:#48c8fa;"></div>
<div class="a " style="left:313px;top:382px;width:1px;height:19px;background:#c0c0c0;"></div>
<div class="a " style="left:248px;top:400px;width:65px;height:1px;background:#c0c0c0;"></div>
<div class="a t" style="left:248px;top:381px;width:63px;text-align:right;height:20px;line-height:20px;font-size:11px;color:#0b2f7a;">433,462</div>
<div class="a " style="left:314px;top:382px;width:67px;height:18px;background:#48c8fa;"></div>
<div class="a " style="left:381px;top:382px;width:1px;height:19px;background:#c0c0c0;"></div>
<div class="a " style="left:314px;top:400px;width:67px;height:1px;background:#c0c0c0;"></div>
<div class="a t" style="left:314px;top:381px;width:65px;text-align:right;height:20px;line-height:20px;font-size:11px;color:#0b2f7a;">355,45</div>
<div class="a " style="left:382px;top:382px;width:84px;height:18px;background:#48c8fa;"></div>
<div class="a " style="left:466px;top:382px;width:1px;height:19px;background:#c0c0c0;"></div>
<div class="a " style="left:382px;top:400px;width:84px;height:1px;background:#c0c0c0;"></div>
<div class="a t" style="left:382px;top:381px;width:82px;text-align:right;height:20px;line-height:20px;font-size:11px;color:#0b2f7a;">248,598</div>
<div class="a " style="left:467px;top:382px;width:80px;height:18px;background:#48c8fa;"></div>
<div class="a " style="left:547px;top:382px;width:1px;height:19px;background:#c0c0c0;"></div>
<div class="a " style="left:467px;top:400px;width:80px;height:1px;background:#c0c0c0;"></div>
<div class="a t" style="left:467px;top:381px;width:78px;text-align:right;height:20px;line-height:20px;font-size:11px;color:#0b2f7a;">203,85</div>
<div class="a " style="left:548px;top:382px;width:75px;height:18px;background:#48c8fa;"></div>
<div class="a " style="left:623px;top:382px;width:1px;height:19px;background:#c0c0c0;"></div>
<div class="a " style="left:548px;top:400px;width:75px;height:1px;background:#c0c0c0;"></div>
<div class="a t" style="left:548px;top:381px;width:73px;text-align:right;height:20px;line-height:20px;font-size:11px;color:#0b2f7a;">0,000</div>
<div class="a " style="left:624px;top:382px;width:68px;height:18px;background:#48c8fa;"></div>
<div class="a " style="left:692px;top:382px;width:1px;height:19px;background:#c0c0c0;"></div>
<div class="a " style="left:624px;top:400px;width:68px;height:1px;background:#c0c0c0;"></div>
<div class="a t" style="left:624px;top:381px;width:66px;text-align:right;height:20px;line-height:20px;font-size:11px;color:#0b2f7a;">0,8200</div>
<div class="a " style="left:12px;top:401px;width:91px;height:18px;background:#fff;"></div>
<div class="a " style="left:103px;top:401px;width:1px;height:19px;background:#c0c0c0;"></div>
<div class="a " style="left:12px;top:419px;width:91px;height:1px;background:#c0c0c0;"></div>
<div class="a t" style="left:13px;top:400px;white-space:nowrap;height:20px;line-height:20px;font-size:11px;color:#000;">1&nbsp;&nbsp;/000066170</div>
<div class="a " style="left:104px;top:401px;width:30px;height:18px;background:#fff;"></div>
<div class="a " style="left:134px;top:401px;width:1px;height:19px;background:#c0c0c0;"></div>
<div class="a " style="left:104px;top:419px;width:30px;height:1px;background:#c0c0c0;"></div>
<div class="a t" style="left:104px;top:400px;width:28px;text-align:right;height:20px;line-height:20px;font-size:11px;color:#000;">3</div>
<div class="a " style="left:135px;top:401px;width:70px;height:18px;background:#fff;"></div>
<div class="a " style="left:205px;top:401px;width:1px;height:19px;background:#c0c0c0;"></div>
<div class="a " style="left:135px;top:419px;width:70px;height:1px;background:#c0c0c0;"></div>
<div class="a t" style="left:136px;top:400px;white-space:nowrap;height:20px;line-height:20px;font-size:11px;color:#000;">19/04/2022</div>
<div class="a " style="left:206px;top:401px;width:41px;height:18px;background:#fff;"></div>
<div class="a " style="left:247px;top:401px;width:1px;height:19px;background:#c0c0c0;"></div>
<div class="a " style="left:206px;top:419px;width:41px;height:1px;background:#c0c0c0;"></div>
<div class="a t" style="left:206px;top:400px;width:39px;text-align:right;height:20px;line-height:20px;font-size:11px;color:#000;">5924</div>
<div class="a " style="left:248px;top:401px;width:65px;height:18px;background:#fff;"></div>
<div class="a " style="left:313px;top:401px;width:1px;height:19px;background:#c0c0c0;"></div>
<div class="a " style="left:248px;top:419px;width:65px;height:1px;background:#c0c0c0;"></div>
<div class="a t" style="left:248px;top:400px;width:63px;text-align:right;height:20px;line-height:20px;font-size:11px;color:#000;">98,130</div>
<div class="a " style="left:314px;top:401px;width:67px;height:18px;background:#fff;"></div>
<div class="a " style="left:381px;top:401px;width:1px;height:19px;background:#c0c0c0;"></div>
<div class="a " style="left:314px;top:419px;width:67px;height:1px;background:#c0c0c0;"></div>
<div class="a t" style="left:314px;top:400px;width:65px;text-align:right;height:20px;line-height:20px;font-size:11px;color:#000;">80,47</div>
<div class="a " style="left:382px;top:401px;width:84px;height:18px;background:#fff;"></div>
<div class="a " style="left:466px;top:401px;width:1px;height:19px;background:#c0c0c0;"></div>
<div class="a " style="left:382px;top:419px;width:84px;height:1px;background:#c0c0c0;"></div>
<div class="a t" style="left:382px;top:400px;width:82px;text-align:right;height:20px;line-height:20px;font-size:11px;color:#000;">0,000</div>
<div class="a " style="left:467px;top:401px;width:80px;height:18px;background:#fff;"></div>
<div class="a " style="left:547px;top:401px;width:1px;height:19px;background:#c0c0c0;"></div>
<div class="a " style="left:467px;top:419px;width:80px;height:1px;background:#c0c0c0;"></div>
<div class="a t" style="left:467px;top:400px;width:78px;text-align:right;height:20px;line-height:20px;font-size:11px;color:#000;">0,00</div>
<div class="a " style="left:548px;top:401px;width:75px;height:18px;background:#fff;"></div>
<div class="a " style="left:623px;top:401px;width:1px;height:19px;background:#c0c0c0;"></div>
<div class="a " style="left:548px;top:419px;width:75px;height:1px;background:#c0c0c0;"></div>
<div class="a t" style="left:548px;top:400px;width:73px;text-align:right;height:20px;line-height:20px;font-size:11px;color:#000;">0,000</div>
<div class="a " style="left:624px;top:401px;width:68px;height:18px;background:#fff;"></div>
<div class="a " style="left:692px;top:401px;width:1px;height:19px;background:#c0c0c0;"></div>
<div class="a " style="left:624px;top:419px;width:68px;height:1px;background:#c0c0c0;"></div>
<div class="a t" style="left:624px;top:400px;width:66px;text-align:right;height:20px;line-height:20px;font-size:11px;color:#000;">0,8199</div>
<div class="a " style="left:12px;top:420px;width:91px;height:18px;background:#fff;"></div>
<div class="a " style="left:103px;top:420px;width:1px;height:19px;background:#c0c0c0;"></div>
<div class="a " style="left:12px;top:438px;width:91px;height:1px;background:#c0c0c0;"></div>
<div class="a t" style="left:13px;top:419px;white-space:nowrap;height:20px;line-height:20px;font-size:11px;color:#000;">2&nbsp;&nbsp;/000066170</div>
<div class="a " style="left:104px;top:420px;width:30px;height:18px;background:#fff;"></div>
<div class="a " style="left:134px;top:420px;width:1px;height:19px;background:#c0c0c0;"></div>
<div class="a " style="left:104px;top:438px;width:30px;height:1px;background:#c0c0c0;"></div>
<div class="a t" style="left:104px;top:419px;width:28px;text-align:right;height:20px;line-height:20px;font-size:11px;color:#000;">1</div>
<div class="a " style="left:135px;top:420px;width:70px;height:18px;background:#fff;"></div>
<div class="a " style="left:205px;top:420px;width:1px;height:19px;background:#c0c0c0;"></div>
<div class="a " style="left:135px;top:438px;width:70px;height:1px;background:#c0c0c0;"></div>
<div class="a t" style="left:136px;top:419px;white-space:nowrap;height:20px;line-height:20px;font-size:11px;color:#000;">19/04/2022</div>
<div class="a " style="left:206px;top:420px;width:41px;height:18px;background:#fff;"></div>
<div class="a " style="left:247px;top:420px;width:1px;height:19px;background:#c0c0c0;"></div>
<div class="a " style="left:206px;top:438px;width:41px;height:1px;background:#c0c0c0;"></div>
<div class="a t" style="left:206px;top:419px;width:39px;text-align:right;height:20px;line-height:20px;font-size:11px;color:#000;">5924</div>
<div class="a " style="left:248px;top:420px;width:65px;height:18px;background:#fff;"></div>
<div class="a " style="left:313px;top:420px;width:1px;height:19px;background:#c0c0c0;"></div>
<div class="a " style="left:248px;top:438px;width:65px;height:1px;background:#c0c0c0;"></div>
<div class="a t" style="left:248px;top:419px;width:63px;text-align:right;height:20px;line-height:20px;font-size:11px;color:#000;">288,358</div>
<div class="a " style="left:314px;top:420px;width:67px;height:18px;background:#fff;"></div>
<div class="a " style="left:381px;top:420px;width:1px;height:19px;background:#c0c0c0;"></div>
<div class="a " style="left:314px;top:438px;width:67px;height:1px;background:#c0c0c0;"></div>
<div class="a t" style="left:314px;top:419px;width:65px;text-align:right;height:20px;line-height:20px;font-size:11px;color:#000;">236,45</div>
<div class="a " style="left:382px;top:420px;width:84px;height:18px;background:#fff;"></div>
<div class="a " style="left:466px;top:420px;width:1px;height:19px;background:#c0c0c0;"></div>
<div class="a " style="left:382px;top:438px;width:84px;height:1px;background:#c0c0c0;"></div>
<div class="a t" style="left:382px;top:419px;width:82px;text-align:right;height:20px;line-height:20px;font-size:11px;color:#000;">0,000</div>
<div class="a " style="left:467px;top:420px;width:80px;height:18px;background:#fff;"></div>
<div class="a " style="left:547px;top:420px;width:1px;height:19px;background:#c0c0c0;"></div>
<div class="a " style="left:467px;top:438px;width:80px;height:1px;background:#c0c0c0;"></div>
<div class="a t" style="left:467px;top:419px;width:78px;text-align:right;height:20px;line-height:20px;font-size:11px;color:#000;">0,00</div>
<div class="a " style="left:548px;top:420px;width:75px;height:18px;background:#fff;"></div>
<div class="a " style="left:623px;top:420px;width:1px;height:19px;background:#c0c0c0;"></div>
<div class="a " style="left:548px;top:438px;width:75px;height:1px;background:#c0c0c0;"></div>
<div class="a t" style="left:548px;top:419px;width:73px;text-align:right;height:20px;line-height:20px;font-size:11px;color:#000;">0,000</div>
<div class="a " style="left:624px;top:420px;width:68px;height:18px;background:#fff;"></div>
<div class="a " style="left:692px;top:420px;width:1px;height:19px;background:#c0c0c0;"></div>
<div class="a " style="left:624px;top:438px;width:68px;height:1px;background:#c0c0c0;"></div>
<div class="a t" style="left:624px;top:419px;width:66px;text-align:right;height:20px;line-height:20px;font-size:11px;color:#000;">0,8199</div>
<div class="a " style="left:991px;top:341px;width:16px;height:222px;background:#f0f0f0;"></div>
<div class="a " style="left:990px;top:341px;width:1px;height:22px;background:#f0f0f0;"></div>
<div class="a " style="left:12px;top:563px;width:995px;height:16px;background:#f0f0f0;"></div>
<svg class="a" style="left:994px;top:368px" width="10" height="9"><path d="M1 7 L4.5 3.5 L8 7 V4.6 L4.5 1 L1 4.6 Z" fill="#555"/></svg>
<svg class="a" style="left:994px;top:550px" width="10" height="9"><path d="M1 1 L4.5 4.5 L8 1 V3.4 L4.5 7 L1 3.4 Z" fill="#555"/></svg>
<svg class="a" style="left:16px;top:566px" width="9" height="10"><path d="M4.8 1 H7.3 L4 4.5 L7.3 8 H4.8 L1.3 4.5 Z" fill="#555"/></svg>
<svg class="a" style="left:977px;top:566px" width="9" height="10"><path d="M2.2 1 H4.7 L8.2 4.5 L4.7 8 H2.2 L5.5 4.5 Z" fill="#555"/></svg>
<div class="a " style="left:11px;top:582px;width:97px;height:20px;box-sizing:border-box;background:#e1e1e1;border:1px solid #adadad;"></div>
<svg class="a" style="left:30px;top:580px" width="26" height="24" viewBox="0 0 26 24">
<defs><linearGradient id="al584" x1="0" y1="0" x2="0" y2="1"><stop offset="0" stop-color="#dfe8fa"/><stop offset="1" stop-color="#a8bfe6"/></linearGradient></defs>
<rect x="6.4" y="8.4" width="11.2" height="10.4" fill="#fff" stroke="#6a82b0" stroke-width="1"/>
<rect x="8" y="12" width="8" height="5.2" fill="url(#al584)"/>
<path d="M7 10 Q9 7.5 11.5 6.5 Q13 5 15.5 4.8 L19.5 4.8 Q21.3 6 20.8 9.5 L17.5 11.5 Q15 12.3 13.5 11.5 Q10 10.8 7 10 Z" fill="#eab348" stroke="#a87514" stroke-width="0.6"/>
<path d="M15 6.3 q2 -0.3 4 0.3" stroke="#fff0b8" stroke-width="0.9" fill="none"/></svg>
<div class="a t" style="left:54px;top:582px;white-space:nowrap;height:20px;line-height:20px;font-size:11px;color:#000;">Al<u>t</u>era</div>
<div class="a " style="left:110px;top:582px;width:97px;height:20px;box-sizing:border-box;background:#e1e1e1;border:1px solid #adadad;"></div>
<svg class="a" style="left:122px;top:580px" width="24" height="24" viewBox="0 0 24 24">
<rect x="6.6" y="5.7" width="13.2" height="13" rx="1.2" fill="#f6f0fc" stroke="#1e90ff" stroke-width="1.6"/>
<rect x="7.3" y="6.4" width="11.8" height="1.8" fill="#1e7ee8"/>
<path d="M14.8 15.5 L17.8 18.3" stroke="#f06a20" stroke-width="2.2"/>
<circle cx="12.4" cy="12.2" r="2.9" fill="#9ad8f8" stroke="#555" stroke-width="1.2"/></svg>
<div class="a t" style="left:145px;top:582px;white-space:nowrap;height:20px;line-height:20px;font-size:11px;color:#000;">Co<u>n</u>sulta</div>
<div class="a " style="left:209px;top:582px;width:97px;height:20px;box-sizing:border-box;background:#e1e1e1;border:1px solid #adadad;"></div>
<svg class="a" style="left:222px;top:578px" width="24" height="26" viewBox="0 0 24 26">
<g stroke="#1a7a1a" stroke-width="0.7" fill="#3cc23c" stroke-linejoin="round"><path d="M6.61 15.13 A6.8 6.8 0 0 1 10.13 6.64 L9.45 5.19 L13.27 7.71 L12.24 11.17 L11.56 9.72 A3.4 3.4 0 0 0 9.81 13.96 Z"/><path d="M14.18 6.10 A6.8 6.8 0 0 1 19.77 13.39 L21.37 13.53 L17.28 15.58 L14.79 12.96 L16.39 13.10 A3.4 3.4 0 0 0 13.59 9.45 Z"/><path d="M18.21 17.17 A6.8 6.8 0 0 1 9.10 18.37 L8.18 19.68 L8.46 15.12 L11.97 14.27 L11.05 15.59 A3.4 3.4 0 0 0 15.60 14.99 Z"/></g></svg>
<div class="a t" style="left:247px;top:582px;white-space:nowrap;height:20px;line-height:20px;font-size:11px;color:#000;">Atual<u>i</u>za</div>
<div class="a " style="left:875px;top:582px;width:25px;height:20px;box-sizing:border-box;background:#e1e1e1;border:1px solid #adadad;"></div>
<svg class="a" style="left:875px;top:582px" width="25" height="20" viewBox="0 0 25 20">
<defs><radialGradient id="c286r" cx="0.35" cy="0.35" r="0.7"><stop offset="0" stop-color="#ff9a7a"/><stop offset="1" stop-color="#e0401e"/></radialGradient>
<radialGradient id="c286g" cx="0.35" cy="0.35" r="0.7"><stop offset="0" stop-color="#a8e890"/><stop offset="1" stop-color="#3aa030"/></radialGradient>
<radialGradient id="c286b" cx="0.4" cy="0.35" r="0.7"><stop offset="0" stop-color="#8fd8ff"/><stop offset="1" stop-color="#2a78e0"/></radialGradient></defs>
<circle cx="7.8" cy="8.8" r="3.6" fill="url(#c286r)"/>
<circle cx="14.8" cy="7.3" r="4.3" fill="url(#c286g)"/>
<circle cx="12" cy="12.8" r="4" fill="url(#c286b)" stroke="#1f5cc0" stroke-width="0.7"/></svg>
<div class="a " style="left:902px;top:582px;width:25px;height:20px;box-sizing:border-box;background:#e1e1e1;border:1px solid #adadad;"></div>
<svg class="a" style="left:902px;top:582px" width="25" height="20" viewBox="0 0 25 20">
<rect x="4.6" y="2.8" width="13.2" height="12.6" rx="1.2" fill="#f2eefa" stroke="#1e90ff" stroke-width="1.5"/>
<rect x="5.3" y="3.4" width="11.8" height="2.2" fill="#3d8ee8"/>
<rect x="7.2" y="6" width="2.8" height="9" fill="#f05a30"/>
<path d="M5.5 8.5 h11.5 M5.5 11 h11.5 M5.5 13.5 h11.5 M12.5 6 v9 M15 6 v9" stroke="#b8b0e0" stroke-width="0.6"/>
<path d="M8.5 8.2 Q10 5 13.5 4.6 L19.5 4.4 Q21.3 6.5 20.3 9.8 L16 11 Q13 11.5 11.5 10 Q9.5 9.5 8.5 8.2 Z" fill="#e6b850" stroke="#9a6a12" stroke-width="0.6"/>
<path d="M12 6.5 q1.5 0.5 3 0" stroke="#fff2b0" stroke-width="0.8" fill="none"/></svg>
<div class="a " style="left:929px;top:582px;width:25px;height:20px;box-sizing:border-box;background:#e1e1e1;border:1px solid #adadad;"></div>
<svg class="a" style="left:929px;top:582px" width="25" height="20" viewBox="0 0 25 20">
<rect x="4.75" y="2.75" width="13.5" height="13.2" rx="1.3" fill="#f4f0fc" stroke="#1e90ff" stroke-width="1.5"/>
<rect x="5.3" y="3.3" width="12.4" height="2" fill="#3d8ee8"/>
<path d="M9 14.2 V8.5" stroke="#ff1010" stroke-width="2.2"/>
<path d="M6.6 9.3 L9 6.2 L11.4 9.3 Z" fill="#ff1010"/>
<path d="M14 6.2 V11.6" stroke="#108020" stroke-width="2.2"/>
<path d="M11.6 10.8 L14 13.8 L16.4 10.8 Z" fill="#108020"/></svg>
<div class="a " style="left:956px;top:582px;width:25px;height:20px;box-sizing:border-box;background:#e1e1e1;border:1px solid #adadad;"></div>
<svg class="a" style="left:956px;top:582px" width="25" height="20" viewBox="0 0 25 20">
<path d="M7.5 2.8 H17 L19.5 5.3 V17.3 H7.5 Z" fill="#dfe8f6" stroke="#2a3f78" stroke-width="1"/>
<path d="M9.5 15 h5 M17 7 v6" stroke="#8aa6d6" stroke-width="0.8"/>
<rect x="3.9" y="2.8" width="10.4" height="9" rx="1" fill="#2a9a30"/>
<rect x="5.8" y="4.6" width="7.6" height="6.4" fill="#d8f5c8"/>
<path d="M7 5.5 L11.8 10.2 M11.8 5.5 L7 10.2" stroke="#1f7a24" stroke-width="1.4"/></svg>
<div class="a " style="left:983px;top:582px;width:25px;height:20px;box-sizing:border-box;background:#e1e1e1;border:1px solid #adadad;"></div>
<svg class="a" style="left:983px;top:582px" width="25" height="20" viewBox="0 0 25 20">
<path d="M3.8 7 Q4.5 5 7.5 4.6 L13 9.5 L12 13.8 L8.8 14 Z" fill="#505050"/>
<path d="M9.5 4.6 Q11 3.6 13.2 4 L19.2 9.2 L18.4 12.8 L14.8 12.8 Z" fill="#505050"/>
<path d="M5.2 6.8 Q6 5.6 7.6 5.6 L10 7.8 L7.4 9 Z" fill="#d8d8d8"/>
<path d="M10.6 5 Q11.8 4.5 13 4.8 L15.2 6.8 L12.6 7.8 Z" fill="#d8d8d8"/>
<circle cx="10.6" cy="11.2" r="2.4" fill="#9ad4ff" stroke="#404040" stroke-width="0.8"/>
<circle cx="16.4" cy="10.4" r="2.3" fill="#9ad4ff" stroke="#404040" stroke-width="0.8"/>
<path d="M9.6 10.2 l1 -0.6 M15.4 9.4 l1 -0.6" stroke="#fff" stroke-width="0.9"/></svg>
<div class="a" style="left:6px;top:337px;width:103px;height:126px;box-sizing:border-box;border:5px solid #0000a8;"></div>
<div class="a " style="left:803px;top:626px;width:97px;height:38px;box-sizing:border-box;background:#e1e1e1;border:1px solid #adadad;"></div>
<svg class="a" style="left:817px;top:637px" width="16" height="15" viewBox="0 0 16 15">
<defs><linearGradient id="ra" x1="0" y1="0" x2="0" y2="1"><stop offset="0" stop-color="#ff9a9a"/><stop offset="0.5" stop-color="#ff3030"/><stop offset="1" stop-color="#d01818"/></linearGradient></defs>
<path d="M1.5 7.5 L7.5 1.8 V4.8 H14.5 V10.2 H7.5 V13.2 Z" fill="url(#ra)" stroke="#c02020" stroke-width="0.7" stroke-linejoin="round"/></svg>
<div class="a t" style="left:837px;top:628px;white-space:nowrap;height:20px;line-height:20px;font-size:11px;color:#000;"><u>V</u>oltar</div>
<div class="a t" style="left:837px;top:642px;white-space:nowrap;height:20px;line-height:20px;font-size:11px;color:#000;">(page up)</div>
<div class="a " style="left:911px;top:626px;width:97px;height:38px;box-sizing:border-box;background:#e5f1fb;border:1px solid #0078d7;box-shadow:inset 0 0 0 0.5px #0078d7;"></div>
<div class="a " style="left:913px;top:628px;width:93px;height:34px;box-sizing:border-box;border:1px dotted #000;"></div>
<svg class="a" style="left:984px;top:637px" width="16" height="15" viewBox="0 0 16 15">
<defs><linearGradient id="ga" x1="0" y1="0" x2="0" y2="1"><stop offset="0" stop-color="#a8f070"/><stop offset="0.5" stop-color="#50c830"/><stop offset="1" stop-color="#30a020"/></linearGradient></defs>
<path d="M14 7.5 L8 1.8 V4.8 H1 V10.2 H8 V13.2 Z" fill="url(#ga)" stroke="#2a8a1a" stroke-width="0.7" stroke-linejoin="round"/></svg>
<div class="a t" style="left:919px;top:628px;white-space:nowrap;height:20px;line-height:20px;font-size:11px;color:#000;"><u>A</u>vançar</div>
<div class="a t" style="left:919px;top:642px;white-space:nowrap;height:20px;line-height:20px;font-size:11px;color:#000;">(page down)</div>
</body></html>
